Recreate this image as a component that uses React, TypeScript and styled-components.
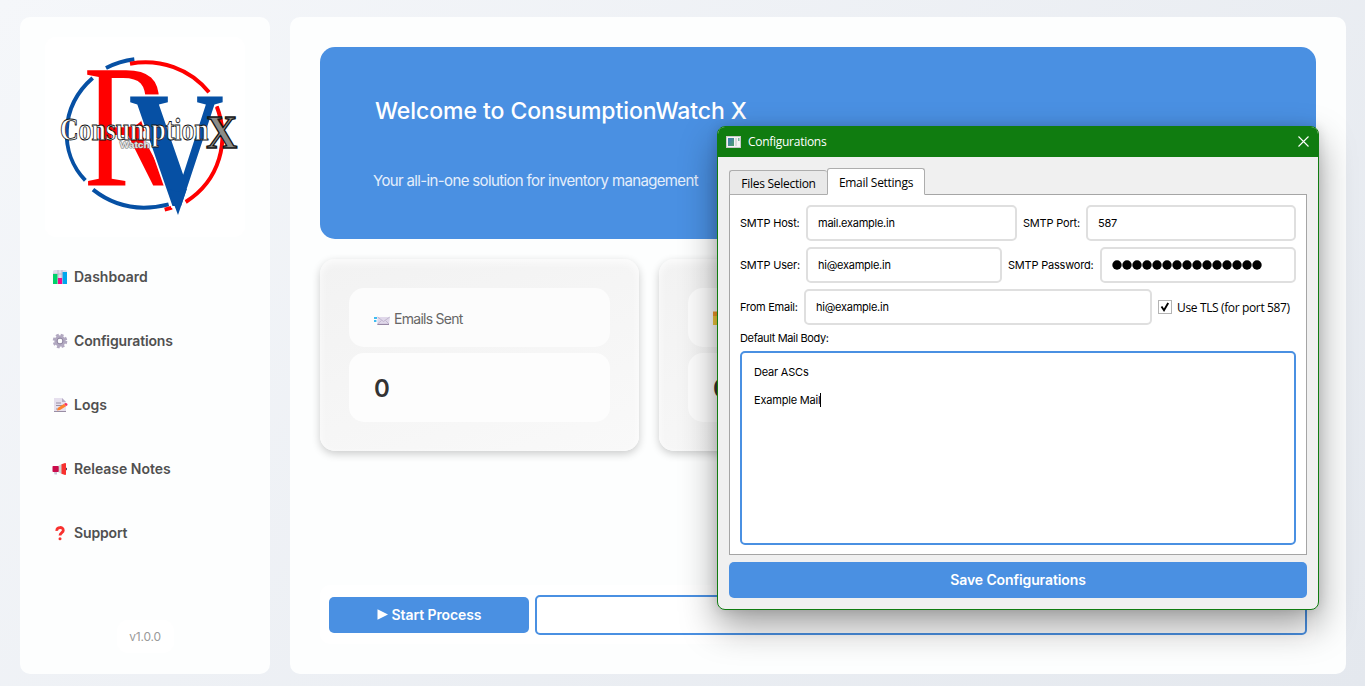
import React from "react";
import styled, { createGlobalStyle } from "styled-components";

const GlobalStyle = createGlobalStyle`
  * { box-sizing: border-box; }
  body {
    margin: 0;
    font-family: Inter, "Liberation Sans", sans-serif;
    overflow: hidden;
  }
`;

const Page = styled.div`
  position: relative;
  display: flex;
  gap: 20px;
  width: 1365px;
  height: 686px;
  padding: 17px 19px 12px 20px;
  background: linear-gradient(135deg, #f5f7fa 0%, #e4e8ee 100%);
`;

const Sidebar = styled.aside`
  display: flex;
  flex-direction: column;
  align-items: center;
  width: 250px;
  padding-top: 20px;
  border-radius: 10px;
  background: #fdfefe;
`;

const LogoBox = styled.div`
  width: 200px;
  height: 200px;
  border-radius: 10px;
  background: #fff;
`;

const Nav = styled.nav`
  display: flex;
  flex-direction: column;
  gap: 14px;
  width: 100%;
  margin-top: 15px;
`;

const NavItem = styled.a<{ $spacing?: string }>`
  display: flex;
  align-items: center;
  gap: 6px;
  height: 50px;
  padding-left: 32px;
  color: #505050;
  font-size: 14px;
  font-weight: 600;
  letter-spacing: ${(p) => p.$spacing ?? "0"};
  white-space: nowrap;
  svg { flex: none; }
  span { padding-bottom: 1px; }
`;

const Version = styled.div`
  display: flex;
  align-items: center;
  justify-content: center;
  width: 57px;
  height: 33px;
  margin-top: 62px;
  border-radius: 10px;
  background: #fff;
  color: #999;
  font-size: 12px;
  letter-spacing: -0.2px;
`;

const Main = styled.main`
  display: flex;
  flex-direction: column;
  width: 1056px;
  padding: 30px;
  border-radius: 10px;
  background: #fdfefe;
`;

const Hero = styled.section`
  width: 996px;
  height: 192px;
  padding: 48px 54px;
  border-radius: 15px;
  background: #4a90e2;
  color: #fff;
`;

const HeroTitle = styled.h1`
  margin: 0 0 0 1px;
  font-size: 23px;
  line-height: 32px;
  font-weight: 500;
  letter-spacing: -0.06px;
  white-space: nowrap;
`;

const HeroSubtitle = styled.p`
  margin: 42px 0 0 -1px;
  font-size: 15px;
  line-height: 24px;
  letter-spacing: -0.64px;
  color: #e4eefb;
  white-space: nowrap;
`;

const Cards = styled.section`
  display: flex;
  gap: 20px;
  margin-top: 20px;
`;

const Card = styled.article`
  display: flex;
  flex-direction: column;
  gap: 6px;
  width: 319px;
  height: 192px;
  padding: 29px;
  border-radius: 15px;
  background: linear-gradient(160deg, #f2f2f2, #f9f9f9);
  box-shadow: 0 3px 8px rgba(0, 0, 0, 0.2), inset 0 3px 8px rgba(255, 255, 255, 0.8);
`;

const CardLabel = styled.div`
  display: flex;
  align-items: center;
  gap: 4px;
  height: 59px;
  padding-left: 25px;
  border-radius: 15px;
  background: #fcfcfc;
  color: #666;
  font-size: 14px;
  letter-spacing: -0.72px;
  span { padding-top: 1px; }
`;

const CardValue = styled.div`
  display: flex;
  align-items: center;
  height: 69px;
  padding: 1px 0 0 25px;
  border-radius: 15px;
  background: #fdfdfd;
  color: #333;
  font-size: 24px;
  font-weight: 600;
`;

const ProcessBar = styled.section`
  display: flex;
  align-items: center;
  gap: 6px;
  width: 996px;
  height: 60px;
  margin-top: 134px;
  padding: 0 9px;
  border-radius: 10px;
  background: #fff;
`;

const PrimaryButton = styled.button<{ $width: string }>`
  display: flex;
  align-items: center;
  justify-content: center;
  gap: 4px;
  flex: none;
  width: ${(p) => p.$width};
  height: 36px;
  padding: 0 0 1px;
  border: 0;
  border-radius: 5px;
  background: #4a90e2;
  color: #fff;
  font: 600 14px Inter, "Liberation Sans", sans-serif;
  letter-spacing: -0.1px;
`;

const Progress = styled.div`
  flex: 1;
  height: 40px;
  border: 2px solid #4a90e2;
  border-radius: 5px;
  background: #fff;
`;

const Dialog = styled.div`
  position: absolute;
  left: 717px;
  top: 126px;
  display: flex;
  flex-direction: column;
  width: 602px;
  height: 484px;
  border: 1px solid #107c10;
  border-radius: 8px;
  background: #f0f0f0;
  box-shadow: 0 16px 36px rgba(0, 0, 0, 0.38), 0 0 12px rgba(0, 0, 0, 0.12);
  overflow: hidden;
`;

const TitleBar = styled.header`
  display: flex;
  align-items: center;
  height: 30px;
  padding: 0 9px 1px 8px;
  background: #107c10;
  color: #fff;
  font: 12px "Open Sans", "Noto Sans", sans-serif;
  letter-spacing: -0.28px;
`;

const TitleText = styled.span`
  flex: 1;
  margin-left: 7px;
`;

const DialogBody = styled.div`
  display: flex;
  flex-direction: column;
  padding: 11px 11px 0;
`;

const Tabs = styled.div`
  display: flex;
  align-items: flex-end;
  height: 27px;
  margin-bottom: -1px;
  z-index: 1;
  font: 12px "Open Sans", "Noto Sans", sans-serif;
  letter-spacing: -0.28px;
`;

const Tab = styled.div<{ $active?: boolean }>`
  display: flex;
  align-items: center;
  justify-content: center;
  width: 98px;
  height: ${(p) => (p.$active ? "27px" : "25px")};
  padding-top: ${(p) => (p.$active ? "1px" : "2px")};
  border: 1px solid #adadad;
  border-right-width: ${(p) => (p.$active ? "1px" : "0")};
  border-bottom-color: ${(p) => (p.$active ? "#fff" : "#adadad")};
  border-radius: 3px 3px 0 0;
  background: ${(p) => (p.$active ? "#fff" : "#e9e9e9")};
  color: #000;
  white-space: nowrap;
`;

const TabPanel = styled.div`
  display: flex;
  flex-direction: column;
  height: 361px;
  padding: 10px 10px 9px;
  border: 1px solid #a5a5a5;
  background: #fff;
  font-size: 11px;
`;

const Row = styled.div`
  display: flex;
  align-items: center;
  height: 36px;
  margin-bottom: 6px;
`;

const Label = styled.label<{ $width: string; $spacing?: string }>`
  flex: none;
  width: ${(p) => p.$width};
  color: #000;
  letter-spacing: ${(p) => p.$spacing ?? "-0.2px"};
  white-space: nowrap;
`;

const Field = styled.div<{ $width: string; $gap?: string }>`
  display: flex;
  align-items: center;
  flex: none;
  width: ${(p) => p.$width};
  height: 36px;
  margin-right: ${(p) => p.$gap ?? "0"};
  padding-left: 10px;
  border: 2px solid #dfdfdf;
  border-radius: 5px;
  background: #fff;
  color: #000;
  letter-spacing: -0.25px;
`;

const Check = styled.div`
  display: flex;
  align-items: center;
  gap: 5px;
  font: 12px "Open Sans", "Noto Sans", sans-serif;
  letter-spacing: -0.36px;
  white-space: nowrap;
  span { padding-top: 1px; }
`;

const Body = styled.div`
  flex: none;
  height: 194px;
  margin-top: 6px;
  padding: 12px;
  border: 2px solid #4a90e2;
  border-radius: 5px;
  line-height: 14px;
  white-space: pre-line;
  letter-spacing: -0.2px;
`;

const Caret = styled.span`
  display: inline-block;
  width: 1px;
  height: 14px;
  background: #000;
  vertical-align: top;
`;

const SaveRow = styled.div`
  margin-top: 7px;
`;

const Logo = () => (
  <svg width="200" height="200" viewBox="75 50 600 600">
    <g fill="none" strokeWidth="12">
      <path d="M258 143Q298 123 343 117" stroke="#0650a4" />
      <path d="M218 173C118 260 118 400 196 480" stroke="#0650a4" />
      <path d="M219 508C285 560 365 573 446 552" stroke="#0650a4" />
      <path d="M330 130C420 114 510 145 567 216" stroke="#f00" />
      <path d="M590 258C630 360 600 480 497 545" stroke="#f00" />
      <path d="M434 568L456 562" stroke="#f00" />
    </g>
    <g fontFamily="'Liberation Serif', serif">
      <text x="190" y="497" fontSize="528" fill="#f00" textLength="275" lengthAdjust="spacingAndGlyphs">R</text>
      <text x="326" y="552" fontSize="490" fontWeight="700" fill="#0650a4" stroke="#fff" strokeWidth="12" paintOrder="stroke" textLength="286" lengthAdjust="spacingAndGlyphs">V</text>
      <path d="M445 507L474 514L501 505L474 584Z" fill="#0650a4" />
      <text x="120" y="360" fontSize="92" fontWeight="700" fill="#fff" stroke="#111" strokeWidth="2.6" textLength="446" lengthAdjust="spacingAndGlyphs">Consumption</text>
      <text x="558" y="384" fontSize="142" fontWeight="700" fill="#8c8c88" stroke="#111" strokeWidth="4" textLength="94" lengthAdjust="spacingAndGlyphs">X</text>
    </g>
    <text x="299" y="383" fontSize="28" fontWeight="700" fontFamily="'Liberation Sans', sans-serif" fill="#e4e4e4" stroke="#777" strokeWidth="3" paintOrder="stroke" textLength="90" lengthAdjust="spacingAndGlyphs">Watch</text>
  </svg>
);

const ChartIcon = () => (
  <svg width="16" height="16" viewBox="0 0 16 16">
    <rect x="1" y="1" width="14" height="14" rx="1.5" fill="#e2dcec" />
    <path d="M1 5H15M1 10H15M6 1V15M10 1V15" stroke="#bdb4ca" strokeWidth="1" />
    <rect x="1" y="5" width="4.4" height="10" fill="#00d26a" />
    <rect x="6" y="9" width="4" height="6" fill="#f70a8d" />
    <rect x="10.6" y="3" width="4.4" height="12" fill="#00a6ed" />
  </svg>
);

const GearIcon = () => (
  <svg width="16" height="16" viewBox="0 0 16 16">
    <circle cx="8" cy="8" r="6.2" fill="none" stroke="#b1a8c0" strokeWidth="2.2" strokeDasharray="2.87 2" />
    <circle cx="8" cy="8" r="4" fill="none" stroke="#b1a8c0" strokeWidth="3.4" />
    <circle cx="8" cy="8" r="3" fill="none" stroke="#9289a2" strokeWidth="1" />
  </svg>
);

const MemoIcon = () => (
  <svg width="16" height="16" viewBox="0 0 16 16">
    <path d="M2 1H10L14 5V15H2Z" fill="#e6e0ee" />
    <path d="M10 1V5H14Z" fill="#b7adc6" />
    <path d="M4 6H9M4 8.5H12M4 12H7M2 14.5H14" stroke="#998ea4" strokeWidth="1" />
    <path d="M5 13.5L6 10.8L12.2 6.8L14 9.2L8 13Z" fill="#ff822d" />
    <path d="M12.2 6.8L13.6 6Q15.5 5.8 15.6 8L14 9.2Z" fill="#f92f60" />
  </svg>
);

const MegaphoneIcon = () => (
  <svg width="16" height="16" viewBox="0 0 16 16">
    <path d="M2 11H5V13.5H2.5Z" fill="#cdc4d6" />
    <path d="M6 5L10 3V13L6 11Z" fill="#d3d3d3" />
    <rect x="0.5" y="5" width="6.2" height="6" rx="0.8" fill="#ca0b4a" />
    <path d="M9.5 3.2L13 2Q14 1.8 14 3V13Q14 14.2 13 14L9.5 12.8Z" fill="#f8312f" />
    <path d="M14 6.5Q16 8 14 9.5Z" fill="#321b41" />
  </svg>
);

const QuestionIcon = () => (
  <svg width="16" height="16" viewBox="0 0 16 16">
    <path d="M4.8 5.8C4.5 1.5 11.4 1.5 11.3 5.4C11.2 7.6 8 7.6 8 10.6" fill="none" stroke="#f8312f" strokeWidth="2.8" />
    <circle cx="8" cy="13.7" r="1.5" fill="#f8312f" />
  </svg>
);

const EmailIcon = () => (
  <svg width="16" height="16" viewBox="0 0 16 16">
    <path d="M0 8H3M0 11H2.4" stroke="#00a6ed" strokeWidth="1.5" />
    <path d="M3.4 7H16L15 14.6H3.4Z" fill="#e0d8ea" />
    <path d="M3.6 7L9.5 11.5L15.8 7M3.6 14L7.5 10.5M15 14L11.5 10.5" fill="none" stroke="#b9aec8" strokeWidth="0.8" />
    <path d="M3.4 14.4H15" stroke="#8c7d9c" strokeWidth="1" />
  </svg>
);

const FolderIcon = () => (
  <svg width="16" height="16" viewBox="0 0 16 16">
    <path d="M0 1.5H6L8 3.5H15V15H0Z" fill="#f2982a" />
    <rect x="0" y="6" width="15" height="9" fill="#f0c83c" />
  </svg>
);

const WindowIcon = () => (
  <svg width="15" height="12" viewBox="0 0 15 12">
    <defs>
      <linearGradient id="pane" x1="0" y1="0" x2="1" y2="1">
        <stop offset="0" stopColor="#3f78b8" />
        <stop offset="1" stopColor="#4fa06a" />
      </linearGradient>
    </defs>
    <rect x="0.5" y="0.5" width="14" height="11" fill="#f4f4f4" stroke="#c9c9c9" />
    <rect x="2" y="2" width="6" height="8" fill="url(#pane)" />
    <rect x="9" y="2" width="2" height="8" fill="#dadada" />
    <rect x="12" y="2" width="1.5" height="3" fill="#7ab8a0" />
  </svg>
);

const CloseIcon = () => (
  <svg width="11" height="11" viewBox="0 0 11 11">
    <path d="M0.5 0.5L10.5 10.5M10.5 0.5L0.5 10.5" stroke="#fff" strokeWidth="1.1" />
  </svg>
);

const PlayIcon = () => (
  <svg width="11" height="11" viewBox="0 0 11 11">
    <path d="M0.5 0.3L11 5.5L0.5 10.7Z" fill="#fff" />
  </svg>
);

const CheckBox = () => (
  <svg width="14" height="14" viewBox="0 0 14 14">
    <rect x="0.5" y="0.5" width="13" height="13" fill="#fff" stroke="#b4b4b4" />
    <path d="M3.5 6.5L6 10.2L10.2 3" fill="none" stroke="#000" strokeWidth="1.9" />
  </svg>
);

const PasswordDots = () => (
  <svg width="150" height="10" viewBox="0 0 150 10">
    {Array.from({ length: 15 }, (_, i) => (
      <circle key={i} cx={5 + i * 10} cy="5" r="4.7" fill="#000" />
    ))}
  </svg>
);

const navItems = [
  { label: "Dashboard", icon: <ChartIcon /> },
  { label: "Configurations", icon: <GearIcon />, spacing: "-0.14px" },
  { label: "Logs", icon: <MemoIcon /> },
  { label: "Release Notes", icon: <MegaphoneIcon /> },
  { label: "Support", icon: <QuestionIcon />, spacing: "-0.15px" },
];

const cards = [
  { label: "Emails Sent", icon: <EmailIcon /> },
  { label: "Files", icon: <FolderIcon /> },
];

export default function App() {
  return (
    <>
      <GlobalStyle />
      <Page>
        <Sidebar>
          <LogoBox><Logo /></LogoBox>
          <Nav>
            {navItems.map((item) => (
              <NavItem key={item.label} $spacing={item.spacing}>
                {item.icon}
                <span>{item.label}</span>
              </NavItem>
            ))}
          </Nav>
          <Version>v1.0.0</Version>
        </Sidebar>
        <Main>
          <Hero>
            <HeroTitle>Welcome to ConsumptionWatch X</HeroTitle>
            <HeroSubtitle>Your all-in-one solution for inventory management</HeroSubtitle>
          </Hero>
          <Cards>
            {cards.map((card) => (
              <Card key={card.label}>
                <CardLabel>{card.icon}<span>{card.label}</span></CardLabel>
                <CardValue>0</CardValue>
              </Card>
            ))}
          </Cards>
          <ProcessBar>
            <PrimaryButton $width="200px"><PlayIcon />Start Process</PrimaryButton>
            <Progress />
          </ProcessBar>
        </Main>
        <Dialog>
          <TitleBar>
            <WindowIcon />
            <TitleText>Configurations</TitleText>
            <CloseIcon />
          </TitleBar>
          <DialogBody>
            <Tabs>
              <Tab>Files Selection</Tab>
              <Tab $active>Email Settings</Tab>
            </Tabs>
            <TabPanel>
              <Row>
                <Label $width="66px">SMTP Host:</Label>
                <Field $width="211px" $gap="6px">mail.example.in</Field>
                <Label $width="63px">SMTP Port:</Label>
                <Field $width="210px">587</Field>
              </Row>
              <Row>
                <Label $width="66px">SMTP User:</Label>
                <Field $width="196px" $gap="6px">hi@example.in</Field>
                <Label $width="92px">SMTP Password:</Label>
                <Field $width="196px"><PasswordDots /></Field>
              </Row>
              <Row>
                <Label $width="64px" $spacing="-0.25px">From Email:</Label>
                <Field $width="348px" $gap="6px">hi@example.in</Field>
                <Check><CheckBox /><span>Use TLS (for port 587)</span></Check>
              </Row>
              <Label $width="200px" $spacing="-0.35px">Default Mail Body:</Label>
              <Body>{"Dear ASCs\n\nExample Mail"}<Caret /></Body>
            </TabPanel>
            <SaveRow>
              <PrimaryButton $width="578px">Save Configurations</PrimaryButton>
            </SaveRow>
          </DialogBody>
        </Dialog>
      </Page>
    </>
  );
}
